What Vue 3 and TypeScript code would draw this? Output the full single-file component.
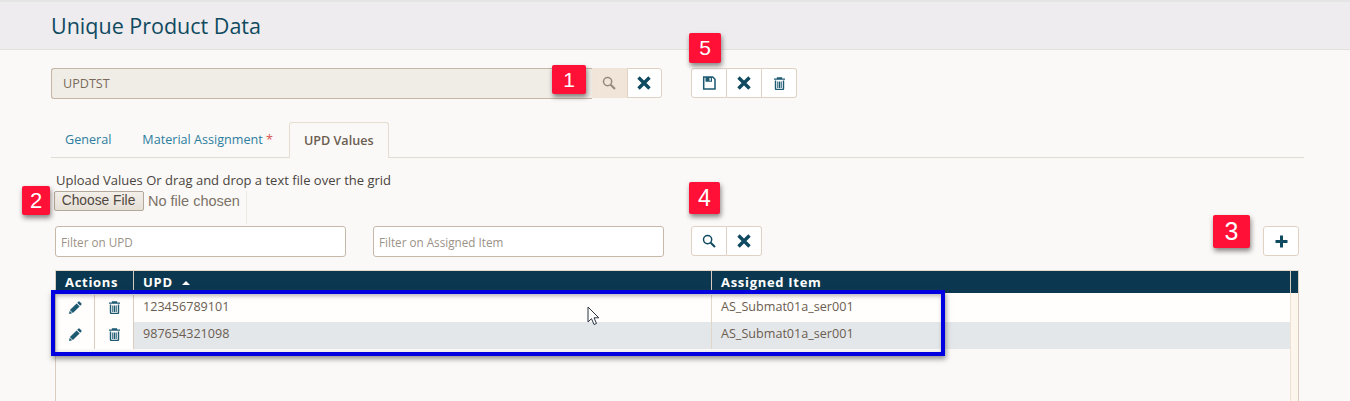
<script setup lang="ts">
const rows = [
  { upd: "123456789101", item: "AS_Submat01a_ser001" },
  { upd: "987654321098", item: "AS_Submat01a_ser001" },
];

const badges = [
  { label: "1", left: 552, top: 65, width: 34, height: 29, size: 21 },
  { label: "5", left: 689, top: 33, width: 32, height: 30, size: 21 },
  { label: "2", left: 22, top: 186, width: 28, height: 29, size: 22 },
  { label: "4", left: 689, top: 182, width: 31, height: 32, size: 23 },
  { label: "3", left: 1213, top: 215, width: 37, height: 33, size: 25 },
];
</script>

<template>
  <div class="page">
    <header class="title-bar">
      <h1>Unique Product Data</h1>
    </header>

    <main class="content">
      <div class="lookup">
        <div class="lookup-input">UPDTST</div>
        <div class="btn-group">
          <button class="icon-btn tinted">
            <svg width="14" height="14" viewBox="0 0 14 14" class="muted"><circle cx="5.600" cy="5.600" r="4.100" fill="none" stroke="currentColor" stroke-width="1.500" /><path d="M8.700 8.700 13 13" stroke="currentColor" stroke-width="2" /></svg>
          </button>
          <button class="icon-btn">
            <svg width="14" height="14" viewBox="0 0 14 14"><path d="M1.500 1.500l11 11M12.500 1.500l-11 11" stroke="currentColor" stroke-width="3.400" /></svg>
          </button>
        </div>
        <div class="btn-group save-group">
          <button class="icon-btn">
            <svg class="soft" width="14" height="14" viewBox="0 0 14 14"><path d="M1.700 1h9l2.300 2.300v9.700h-11.300z" fill="none" stroke="currentColor" stroke-width="1.500" /><path fill-rule="evenodd" d="M3.500 1h6.500v4.800h-6.500zM7.500 2v2.800h1.300v-2.800z" fill="currentColor" /></svg>
          </button>
          <button class="icon-btn">
            <svg width="14" height="14" viewBox="0 0 14 14"><path d="M1.500 1.500l11 11M12.500 1.500l-11 11" stroke="currentColor" stroke-width="3.400" /></svg>
          </button>
          <button class="icon-btn">
            <svg class="soft" width="11" height="13" viewBox="0 0 11 13"><path d="M0 2.200h11M3.500 2v-1.200h4v1.200" fill="none" stroke="currentColor" stroke-width="1.300" /><path d="M1.500 3.500v8a1 1 0 0 0 1 1h6a1 1 0 0 0 1-1v-8" fill="none" stroke="currentColor" stroke-width="1.400" /><path d="M3.800 4.500v6.500M5.500 4.500v6.500M7.200 4.500v6.500" stroke="currentColor" stroke-width="1.100" /></svg>
          </button>
        </div>
      </div>

      <nav class="tabs">
        <a class="tab">General</a>
        <a class="tab">Material Assignment <span class="required">*</span></a>
        <a class="tab active">UPD Values</a>
      </nav>

      <section class="upload">
        <div class="upload-label">Upload Values Or drag and drop a text file over the grid</div>
        <div class="file-row">
          <span class="file-btn">Choose File</span>
          <span class="file-name">No file chosen</span>
        </div>
      </section>

      <div class="filters">
        <div class="filter">Filter on UPD</div>
        <div class="filter">Filter on Assigned Item</div>
        <div class="btn-group">
          <button class="icon-btn">
            <svg width="14" height="14" viewBox="0 0 14 14"><circle cx="5.600" cy="5.600" r="4.100" fill="none" stroke="currentColor" stroke-width="1.500" /><path d="M8.700 8.700 13 13" stroke="currentColor" stroke-width="2" /></svg>
          </button>
          <button class="icon-btn">
            <svg width="14" height="14" viewBox="0 0 14 14"><path d="M1.500 1.500l11 11M12.500 1.500l-11 11" stroke="currentColor" stroke-width="3.400" /></svg>
          </button>
        </div>
        <button class="icon-btn add-btn">
          <svg width="13" height="13" viewBox="0 0 13 13"><path d="M6.500 0.500v12M0.500 6.500h12" stroke="currentColor" stroke-width="3" /></svg>
        </button>
      </div>

      <div class="grid">
        <div class="grid-head">
          <div class="head-cell col-actions">Actions</div>
          <div class="head-cell col-upd">UPD <span class="sort"></span></div>
          <div class="head-cell col-item">Assigned Item</div>
          <div class="head-cell col-scroll"></div>
        </div>
        <div class="grid-body">
          <div class="rows">
            <div v-for="row in rows" :key="row.upd" class="grid-row">
              <div class="action-cell">
                <svg class="soft" width="13" height="13" viewBox="0 0 13 13"><path d="M9.300 0.700a1 1 0 0 1 1.400 0l1.600 1.600a1 1 0 0 1 0 1.400l-1.100 1.100-3-3z" fill="currentColor" /><path d="M7.600 2.400l3 3-6.700 6.700-3-3z" fill="currentColor" /><path d="M0.700 9.800l2.500 2.500-3.200.7z" fill="currentColor" /></svg>
              </div>
              <div class="action-cell">
                <svg class="soft" width="11" height="13" viewBox="0 0 11 13"><path d="M0 2.200h11M3.500 2v-1.200h4v1.200" fill="none" stroke="currentColor" stroke-width="1.300" /><path d="M1.500 3.500v8a1 1 0 0 0 1 1h6a1 1 0 0 0 1-1v-8" fill="none" stroke="currentColor" stroke-width="1.400" /><path d="M3.800 4.500v6.500M5.500 4.500v6.500M7.200 4.500v6.500" stroke="currentColor" stroke-width="1.100" /></svg>
              </div>
              <div class="cell col-upd">{{ row.upd }}</div>
              <div class="cell col-item">{{ row.item }}</div>
            </div>
          </div>
          <div class="scroll-track"></div>
        </div>
      </div>
    </main>

    <div
      v-for="badge in badges"
      :key="badge.label"
      class="badge"
      :style="{ left: badge.left + 'px', top: badge.top + 'px', width: badge.width + 'px', height: badge.height + 'px', fontSize: badge.size + 'px' }"
    >
      {{ badge.label }}
    </div>
    <div class="highlight"></div>
    <svg class="cursor" width="13" height="20" viewBox="0 0 13 20"><path d="M1 1v15l3.500-3.300 2.500 5.800 2.500-1-2.500-5.700h4.800z" fill="#fff" stroke="#2b3440" stroke-width="1" /></svg>
  </div>
</template>

<style>
html,
body {
  margin: 0;
  background: #faf9f7;
}
</style>

<style scoped>
.page {
  position: relative;
  width: 1350px;
  height: 401px;
  overflow: hidden;
  background: #faf9f7;
  font-family: "Open Sans", sans-serif;
  color: #6b5d50;
}

.title-bar {
  box-sizing: border-box;
  height: 50px;
  padding-left: 51px;
  background: #eeecee;
  border-top: 2px solid #e6e5e6;
  border-bottom: 1px solid #e5e0da;
}

.title-bar h1 {
  margin: 0;
  font-size: 21.5px;
  font-weight: 400;
  line-height: 47px;
  color: #0f4a60;
}

.content {
  display: flex;
  flex-direction: column;
  padding: 18px 46px 0 51px;
}

.lookup {
  display: flex;
}

.lookup-input {
  box-sizing: border-box;
  width: 541px;
  height: 31px;
  padding-left: 11px;
  background: #f0ede7;
  border: 1px solid #c6b6a6;
  border-right: none;
  border-radius: 3px 0 0 3px;
  font-size: 12.6px;
  line-height: 29px;
  color: #7a6a5c;
}

.btn-group {
  display: flex;
  height: 30px;
}

.save-group {
  margin-left: 29px;
}

.icon-btn {
  display: flex;
  align-items: center;
  justify-content: center;
  box-sizing: border-box;
  width: 35px;
  height: 30px;
  padding: 0;
  background: #fff;
  border: 1px solid #dfd2c5;
  border-left-width: 0;
  color: #0f4a60;
}

.btn-group .icon-btn:first-child {
  width: 36px;
  border-left-width: 1px;
  border-radius: 3px 0 0 3px;
}

.btn-group .icon-btn:last-child {
  border-radius: 0 3px 3px 0;
}

.btn-group .icon-btn.tinted {
  width: 35px;
  padding-right: 2px;
  background: #f1e4d9;
  border: none;
  border-radius: 0;
}

.tinted + .icon-btn {
  border-left-width: 1px;
  padding-right: 2px;
}

.muted {
  color: #96897d;
}

.soft {
  color: #1d5a72;
}

.tabs {
  display: flex;
  box-sizing: border-box;
  height: 36px;
  margin-top: 23px;
  border-bottom: 1px solid #e3dcd3;
  font-size: 12.6px;
}

.tab {
  padding: 0 15px 0 14px;
  line-height: 35px;
  color: #2c7d9e;
}

.tab:nth-child(2) {
  padding-left: 16px;
  padding-right: 16px;
}

.tab.active {
  box-sizing: border-box;
  height: 36px;
  padding: 0 14px;
  background: #faf9f7;
  border: 1px solid #e6dccf;
  border-bottom: none;
  border-radius: 3px 3px 0 0;
  color: #6b5d50;
  font-weight: 600;
}

.required {
  color: #d9534f;
}

.upload {
  margin-top: 13px;
  padding-left: 5px;
}

.upload-label {
  font-size: 13px;
  line-height: 18px;
  color: #4a443e;
}

.file-row {
  display: flex;
  align-items: flex-start;
  box-sizing: border-box;
  width: 193px;
  height: 33px;
  margin: 2px 0 0 -2px;
  border-right: 1px solid #eee9e2;
  font-family: "Liberation Sans", Arial, sans-serif;
}

.file-btn {
  box-sizing: border-box;
  width: 90px;
  height: 20px;
  font-size: 13.8px;
  text-align: center;
  line-height: 18px;
  padding-right: 1px;
  background: linear-gradient(#f3efe9, #e5dfd6);
  border: 1px solid #b3a89b;
  border-radius: 2px;
  color: #4f4740;
}

.file-name {
  margin-left: 4px;
  font-size: 14.5px;
  line-height: 20px;
  color: #7c7268;
}

.filters {
  display: flex;
  margin-top: 2px;
  padding: 0 5px 0 4px;
}

.filter {
  box-sizing: border-box;
  width: 291px;
  height: 31px;
  margin-right: 27px;
  padding-left: 5px;
  background: #fff;
  border: 1px solid #c6b9aa;
  border-radius: 3px;
  font-size: 11.7px;
  line-height: 31px;
  color: #9b9287;
}

.add-btn {
  margin-left: auto;
  width: 36px;
  border-left-width: 1px;
  border-radius: 3px;
}

.grid {
  display: flex;
  flex-direction: column;
  box-sizing: border-box;
  width: 1244px;
  height: 131px;
  margin-top: 13px;
  margin-left: 4px;
  border-top: 1px solid #e3d8cb;
  border-left: 1px solid #dacdbf;
  border-right: 1px solid #dacdbf;
}

.grid-head {
  display: flex;
  height: 22px;
  background: #0b3850;
  color: #fff;
  font-size: 13px;
  font-weight: 700;
  letter-spacing: 0.7px;
  line-height: 23px;
}

.head-cell {
  box-sizing: border-box;
  padding-left: 9px;
  border-right: 1px solid #d6cbbd;
}

.head-cell.col-actions {
  width: 78px;
}

.col-upd {
  width: 578px;
}

.col-item {
  width: 579px;
}

.head-cell.col-scroll {
  flex: 1;
  padding: 0;
  border-right: none;
}

.sort {
  display: inline-block;
  margin: 0 0 2px 5px;
  border-left: 4px solid transparent;
  border-right: 4px solid transparent;
  border-bottom: 4px solid #fff;
}

.grid-body {
  display: flex;
  flex: 1;
}

.rows {
  width: 1234px;
  padding-top: 2px;
  background: linear-gradient(#fffefc, #fffefc) no-repeat top / 100% 2px;
}

.grid-row {
  display: flex;
  height: 27px;
  background: #fffefc;
}

.grid-row:nth-child(2) .cell {
  background: #e4e7ea;
}

.action-cell {
  display: flex;
  align-items: center;
  justify-content: center;
  box-sizing: border-box;
  width: 39px;
  padding-bottom: 2px;
  border-right: 1px solid #dacdbf;
}

.cell {
  box-sizing: border-box;
  padding-left: 9px;
  border-right: 1px solid #e0d6ca;
  font-size: 12.6px;
  line-height: 23px;
  color: #6b5d50;
}

.cell.col-item {
  flex: 1;
  border-right: none;
}

.scroll-track {
  width: 7px;
  margin-left: auto;
  background: #fdf6ec;
  border-left: 1px solid #eee2d4;
}

.badge {
  position: absolute;
  display: flex;
  align-items: center;
  justify-content: center;
  background: #ff1037;
  border-radius: 2px;
  box-shadow: 1px 3px 5px rgba(60, 50, 50, 0.6);
  color: #fff;
  font-family: "Liberation Sans", Arial, sans-serif;
}

.highlight {
  position: absolute;
  left: 51px;
  top: 290px;
  box-sizing: border-box;
  width: 894px;
  height: 66px;
  border: 4px solid #0000e0;
  box-shadow: 1px 3px 5px rgba(50, 50, 50, 0.5), inset 1px 2px 4px rgba(50, 50, 50, 0.35);
}

.cursor {
  position: absolute;
  left: 587px;
  top: 306px;
}
</style>
